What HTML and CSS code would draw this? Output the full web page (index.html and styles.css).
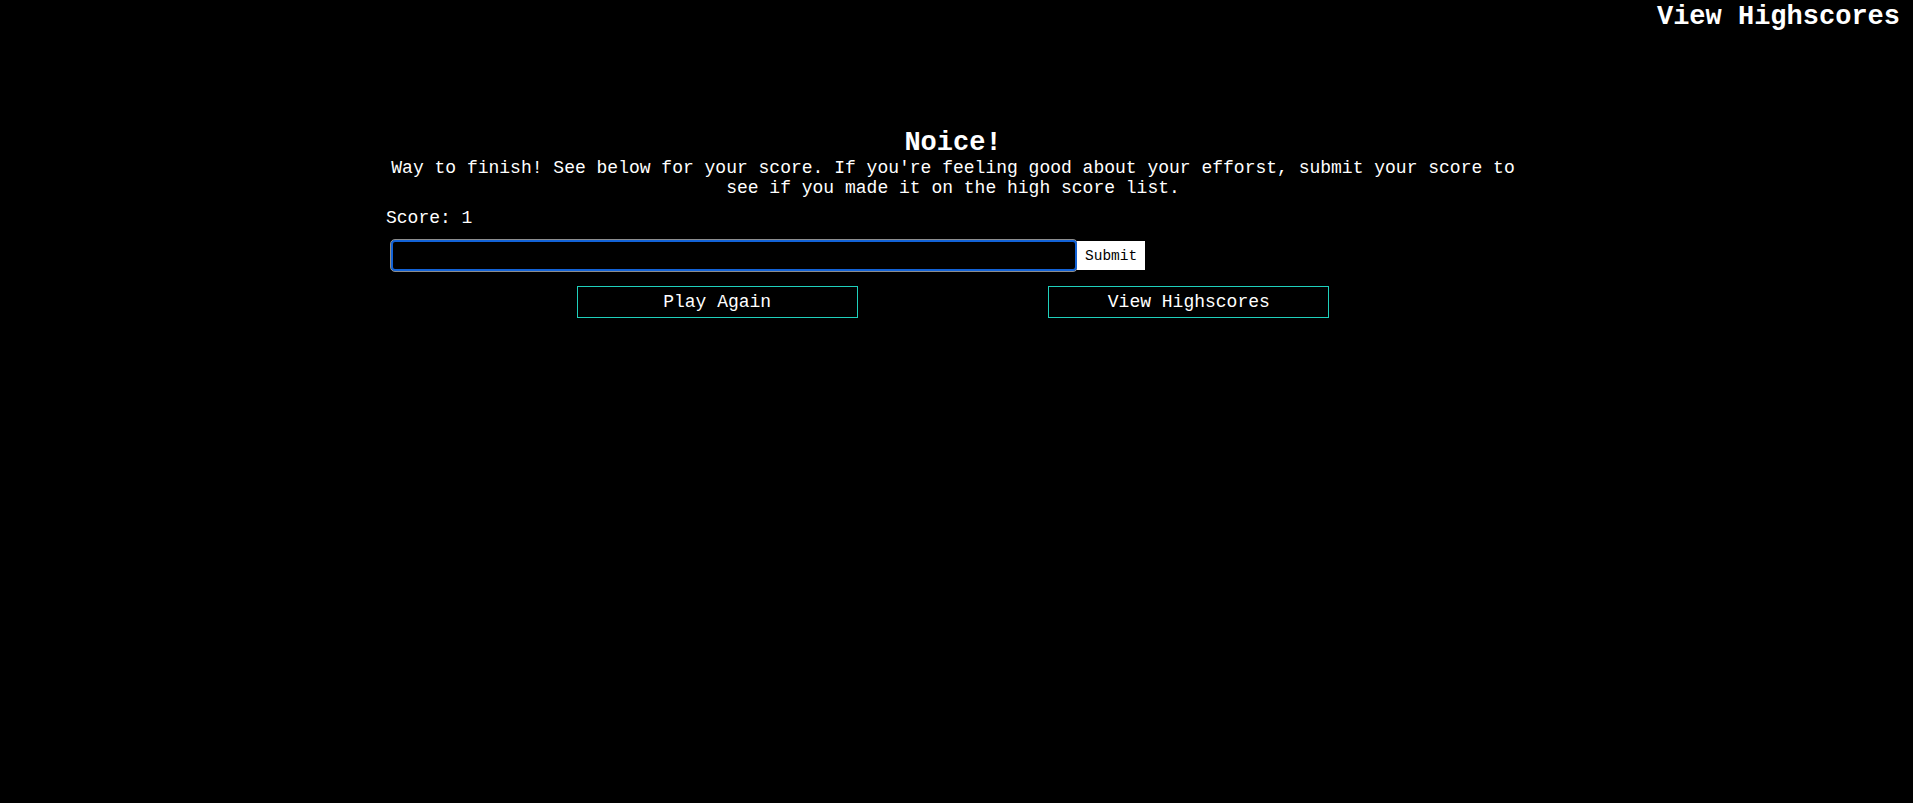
FILE: index.html
```html
<!DOCTYPE html>
<html lang="en">
<head>
<meta charset="utf-8">
<title>Quiz - Done</title>
<link rel="stylesheet" href="styles.css">
</head>
<body>
  <header class="top-bar">
    <a class="top-link" href="#">View Highscores</a>
  </header>
  <main class="panel">
    <h2 class="panel-title">Noice!</h2>
    <p class="panel-text">Way to finish! See below for your score. If you're feeling good about your efforst, submit your score to see if you made it on the high score list.</p>
    <p class="score">Score: 1</p>
    <form class="score-form">
      <input class="name-input" type="text" aria-label="Initials">
      <button class="submit-btn" type="button">Submit</button>
    </form>
    <div class="actions">
      <button class="action-btn" type="button">Play Again</button>
      <button class="action-btn" type="button">View Highscores</button>
    </div>
  </main>
</body>
</html>
```
FILE: styles.css
```css
html, body {
  margin: 0;
  padding: 0;
  background: #000;
  color: #fff;
  font-family: "Liberation Mono", "Courier New", monospace;
  font-size: 18px;
}

.top-bar {
  display: flex;
  justify-content: flex-end;
  padding: 2px 13px 0 0;
}

.top-link {
  color: #fff;
  text-decoration: none;
  font-weight: bold;
  font-size: 27px;
  line-height: normal;
}

.panel {
  width: 1134px;
  margin: 96px 0 0 386px;
}

.panel-title {
  margin: 0;
  font-size: 27px;
  font-weight: bold;
  text-align: center;
  line-height: normal;
}

.panel-text {
  margin: 0;
  text-align: center;
  line-height: normal;
}

.score {
  margin: 10px 0 0 0;
  line-height: normal;
}

.score-form {
  display: flex;
  align-items: center;
  margin: 12px 0 0 5px;
}

.name-input {
  box-sizing: border-box;
  width: 686px;
  height: 31px;
  margin: 0;
  background: #000;
  color: #fff;
  border: 2px solid #1262d6;
  border-radius: 4px;
  outline: 1px solid rgba(255, 255, 255, 0.55);
  outline-offset: 0;
  font-family: inherit;
  font-size: 16px;
  padding: 0 4px;
}

.submit-btn {
  box-sizing: border-box;
  height: 29px;
  margin: 0;
  padding: 0 8px;
  background: #fff;
  color: #000;
  border: none;
  font-family: "Liberation Mono", "Courier New", monospace;
  font-size: 14.5px;
}

.actions {
  display: flex;
  justify-content: space-evenly;
  margin-top: 15px;
}

.action-btn {
  box-sizing: border-box;
  width: 281px;
  height: 32px;
  margin: 0;
  padding: 0;
  background: #000;
  color: #fff;
  border: 1px solid #1fd0bc;
  font-family: "Liberation Mono", "Courier New", monospace;
  font-size: 18px;
}
```
